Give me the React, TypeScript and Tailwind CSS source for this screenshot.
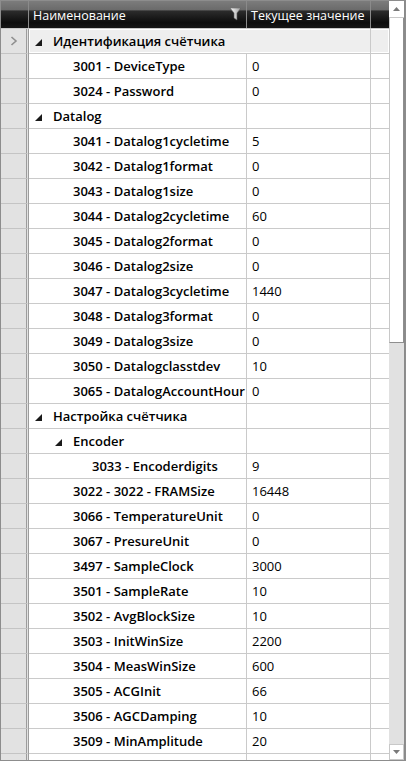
import React from 'react';

type Row = {
  kind: 'group' | 'item';
  depth: number;
  name: string;
  value?: string;
};

const rows: Row[] = [
  { kind: 'group', depth: 0, name: 'Идентификация счётчика' },
  { kind: 'item', depth: 0, name: '3001 - DeviceType', value: '0' },
  { kind: 'item', depth: 0, name: '3024 - Password', value: '0' },
  { kind: 'group', depth: 0, name: 'Datalog' },
  { kind: 'item', depth: 0, name: '3041 - Datalog1cycletime', value: '5' },
  { kind: 'item', depth: 0, name: '3042 - Datalog1format', value: '0' },
  { kind: 'item', depth: 0, name: '3043 - Datalog1size', value: '0' },
  { kind: 'item', depth: 0, name: '3044 - Datalog2cycletime', value: '60' },
  { kind: 'item', depth: 0, name: '3045 - Datalog2format', value: '0' },
  { kind: 'item', depth: 0, name: '3046 - Datalog2size', value: '0' },
  { kind: 'item', depth: 0, name: '3047 - Datalog3cycletime', value: '1440' },
  { kind: 'item', depth: 0, name: '3048 - Datalog3format', value: '0' },
  { kind: 'item', depth: 0, name: '3049 - Datalog3size', value: '0' },
  { kind: 'item', depth: 0, name: '3050 - Datalogclasstdev', value: '10' },
  { kind: 'item', depth: 0, name: '3065 - DatalogAccountHour', value: '0' },
  { kind: 'group', depth: 0, name: 'Настройка счётчика' },
  { kind: 'group', depth: 1, name: 'Encoder' },
  { kind: 'item', depth: 1, name: '3033 - Encoderdigits', value: '9' },
  { kind: 'item', depth: 0, name: '3022 - 3022 - FRAMSize', value: '16448' },
  { kind: 'item', depth: 0, name: '3066 - TemperatureUnit', value: '0' },
  { kind: 'item', depth: 0, name: '3067 - PresureUnit', value: '0' },
  { kind: 'item', depth: 0, name: '3497 - SampleClock', value: '3000' },
  { kind: 'item', depth: 0, name: '3501 - SampleRate', value: '10' },
  { kind: 'item', depth: 0, name: '3502 - AvgBlockSize', value: '10' },
  { kind: 'item', depth: 0, name: '3503 - InitWinSize', value: '2200' },
  { kind: 'item', depth: 0, name: '3504 - MeasWinSize', value: '600' },
  { kind: 'item', depth: 0, name: '3505 - ACGInit', value: '66' },
  { kind: 'item', depth: 0, name: '3506 - AGCDamping', value: '10' },
  { kind: 'item', depth: 0, name: '3509 - MinAmplitude', value: '20' },
  // next row is only partly visible, its text is scrolled out of view
  { kind: 'item', depth: 0, name: '', value: '' },
];

const groupIndent: Record<number, string> = {
  0: 'pl-[6px]',
  1: 'pl-[26px]',
};

const itemIndent: Record<number, string> = {
  0: 'pl-[44px]',
  1: 'pl-[63px]',
};

function ExpandedGlyph() {
  return (
    <svg width="7" height="7" viewBox="0 0 7 7" className="shrink-0">
      <polygon points="7,0 7,7 0,7" fill="#1a1a1a" />
    </svg>
  );
}

function FilterIcon() {
  return (
    <svg width="11" height="13" viewBox="0 0 11 13">
      <defs>
        <linearGradient id="fg" x1="0" y1="0" x2="1" y2="0">
          <stop offset="0" stopColor="#ffffff" />
          <stop offset="1" stopColor="#9a9a9a" />
        </linearGradient>
      </defs>
      <polygon points="0,0 11,0 7,5 7,12 4,10 4,5" fill="url(#fg)" stroke="#5a5a5a" strokeWidth="0.6" />
    </svg>
  );
}

function Chevron() {
  return (
    <svg width="8" height="10" viewBox="0 0 8 10">
      <polyline points="1.5,1 6,5 1.5,9" fill="none" stroke="#8f8f8f" strokeWidth="1.6" />
    </svg>
  );
}

function Arrow({ up }: { up: boolean }) {
  return (
    <svg width="7" height="4" viewBox="0 0 7 4">
      <polygon points={up ? '0,4 7,4 3.5,0' : '0,0 7,0 3.5,4'} fill="#7a7a7a" />
    </svg>
  );
}

const headerBg =
  'bg-[linear-gradient(to_bottom,#7c7c7c_0%,#6a6a6a_34%,#2c2c2c_36%,#0d0d0d_80%,#161616_100%)]';

export default function App() {
  return (
    <div className="w-[406px] h-[762px] overflow-hidden bg-white font-['Open_Sans',sans-serif]">
      <div className="flex w-[406px] h-[761px] border border-[#8d8d8d]">
        <div className="flex-1 flex flex-col min-w-0 overflow-hidden">
          {/* header */}
          <div className={`flex h-[28px] shrink-0 border-b border-[#c8c8c8] ${headerBg}`}>
            <div className="w-[28px] shrink-0 border-r border-[#8a8a8a]" />
            <div className="w-[218px] shrink-0 flex items-end pb-[3px] pl-[4px] pr-[5px] border-r border-[#8a8a8a]">
              <span className="flex-1 text-white text-[12.5px] leading-[18px]">Наименование</span>
              <span className="pb-[4px]">
                <FilterIcon />
              </span>
            </div>
            <div className="w-[124px] shrink-0 flex items-end pb-[3px] pl-[4px] border-r border-[#8a8a8a]">
              <span className="text-white text-[12.5px] leading-[18px] whitespace-nowrap">Текущее значение</span>
            </div>
            <div className="flex-1" />
          </div>
          {/* rows */}
          <div className="flex flex-col">
            {rows.map((r, i) => {
              const selected = i === 0;
              return (
                <div key={i} className="flex h-[25px] shrink-0">
                  <div className="w-[28px] shrink-0 flex items-center justify-center bg-[#e2e2e2] border-b border-b-[#c4c4c4] border-r-[3px] border-double border-r-[#9c9c9c]">
                    {selected && <Chevron />}
                  </div>
                  <div
                    className={`flex flex-1 border-b border-[#cacaca] ${
                      selected ? 'bg-[#eeeeee] shadow-[inset_0_0_0_1px_#ffffff]' : 'bg-white'
                    }`}
                  >
                    {r.kind === 'group' ? (
                      <div
                        className={`w-[218px] shrink-0 flex items-center gap-[11px] pt-[2px] ${groupIndent[r.depth]} ${
                          selected ? '' : 'border-r border-[#cacaca]'
                        }`}
                      >
                        <ExpandedGlyph />
                        <span className="text-[13px] font-semibold text-black whitespace-nowrap">{r.name}</span>
                      </div>
                    ) : (
                      <div
                        className={`w-[218px] shrink-0 flex items-center pt-[2px] overflow-hidden border-r border-[#cacaca] ${itemIndent[r.depth]}`}
                      >
                        <span className="text-[13px] font-semibold text-black whitespace-nowrap">{r.name}</span>
                      </div>
                    )}
                    <div className="w-[124px] shrink-0 flex items-center pt-[2px] pl-[5px] border-r border-[#cacaca]">
                      <span className="text-[13px] text-black">{r.value}</span>
                    </div>
                    <div className="flex-1" />
                  </div>
                </div>
              );
            })}
          </div>
        </div>
        {/* scrollbar */}
        <div className="w-[16px] shrink-0 flex flex-col bg-[#e1e1e1] border-r border-[#8a8a8a]">
          <div className="h-[17px] shrink-0 flex items-center justify-center bg-white border-b border-[#c8c8c8]">
            <Arrow up />
          </div>
          <div className="h-[325px] shrink-0 bg-white border-l border-[#c8c8c8] border-r border-r-[#8e8e8e] border-b border-b-[#8e8e8e]" />
          <div className="flex-1" />
          <div className="h-[16px] shrink-0 flex items-center justify-center bg-white border border-[#c8c8c8]">
            <Arrow up={false} />
          </div>
        </div>
      </div>
    </div>
  );
}
